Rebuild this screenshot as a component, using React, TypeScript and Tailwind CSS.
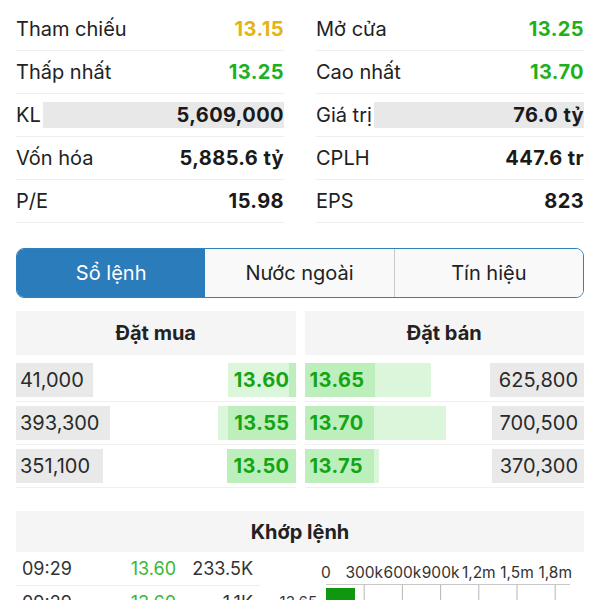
const green = 'text-[#1eb01e]'

const stats = [
  [
    { label: 'Tham chiếu', value: '13.15', color: 'text-[#e2b416]' },
    { label: 'Mở cửa', value: '13.25', color: green },
  ],
  [
    { label: 'Thấp nhất', value: '13.25', color: green },
    { label: 'Cao nhất', value: '13.70', color: green },
  ],
  [
    { label: 'KL', value: '5,609,000', bar: true },
    { label: 'Giá trị', value: '76.0 tỷ', bar: true },
  ],
  [
    { label: 'Vốn hóa', value: '5,885.6 tỷ' },
    { label: 'CPLH', value: '447.6 tr' },
  ],
  [
    { label: 'P/E', value: '15.98' },
    { label: 'EPS', value: '823' },
  ],
]

// volume bar width, light bar width, dark bar width
const bids = [
  { vol: '41,000', price: '13.60', volW: 77, light: 68, dark: 7 },
  { vol: '393,300', price: '13.55', volW: 94, light: 78, dark: 68 },
  { vol: '351,100', price: '13.50', volW: 87, light: 0, dark: 69 },
]

const asks = [
  { vol: '625,800', price: '13.65', volW: 94, light: 126, dark: 70 },
  { vol: '700,500', price: '13.70', volW: 92, light: 141, dark: 69 },
  { vol: '370,300', price: '13.75', volW: 92, light: 74, dark: 69 },
]

const trades = [
  { time: '09:29', price: '13.60', vol: '233.5K' },
  { time: '09:29', price: '13.60', vol: '1.1K' },
]

const ticks = ['0', '300k', '600k', '900k', '1,2m', '1,5m', '1,8m']

function StatRow({ label, value, color, bar }: { label: string; value: string; color?: string; bar?: boolean }) {
  return (
    <div className="flex items-center h-[43px] border-b border-[#efefef]">
      <span className="text-[#222]">{label}</span>
      {bar ? (
        <div className="flex-1 ml-[2px] h-[26px] bg-[#e8e8e8] flex items-center justify-end font-bold tracking-[0.4px] text-[#1a1a1a]">
          {value}
        </div>
      ) : (
        <span className={`ml-auto font-bold tracking-[0.4px] ${color ?? 'text-[#1a1a1a]'}`}>{value}</span>
      )}
    </div>
  )
}

function Chart() {
  return (
    <svg width="324" height="48" className="block" style={{ fontFamily: 'Inter, sans-serif' }}>
      {ticks.map((t, i) => (
        <g key={t}>
          <text x={66 + 38.2 * i} y={26} fontSize="15.5" textAnchor="middle" fill="#333">
            {t}
          </text>
          {i > 0 && <line x1={66 + 38.2 * i} y1={32} x2={66 + 38.2 * i} y2={48} stroke="#b5b5b5" strokeWidth="1" />}
        </g>
      ))}
      <line x1="66" y1="32.5" x2="310" y2="32.5" stroke="#c8c8c8" strokeWidth="1" />
      <rect x="66" y="36" width="29" height="14" fill="#0f970f" />
      <text x="57" y="55" fontSize="15" textAnchor="end" fill="#333">13.65</text>
    </svg>
  )
}

export default function App() {
  return (
    <div className="w-[600px] h-[600px] overflow-hidden bg-white px-4 pt-2 text-[20px] text-[#222]" style={{ fontFamily: 'Inter, "Noto Sans", sans-serif' }}>
      {/* Price stats */}
      <div className="grid grid-cols-2 gap-x-8">
        {stats.map((pair, i) => (
          <div key={i} className="contents">
            <StatRow {...pair[0]} />
            <StatRow {...pair[1]} />
          </div>
        ))}
      </div>

      {/* Tabs */}
      <div className="mt-[25px] h-[50px] flex border border-[#2f80be] rounded-lg overflow-hidden">
        <div className="flex-1 flex items-center justify-center bg-[#2b7cba] text-white">Sổ lệnh</div>
        <div className="flex-1 flex items-center justify-center bg-[#f9f9f9] text-[#222]">Nước ngoài</div>
        <div className="flex-1 flex items-center justify-center bg-[#f9f9f9] text-[#222] border-l border-[#c9c9c9]">Tín hiệu</div>
      </div>

      {/* Order book */}
      <div className="mt-[13px] grid grid-cols-2 gap-x-[9px]">
        <div className="h-[44px] bg-[#f5f5f5] flex items-center justify-center font-bold">Đặt mua</div>
        <div className="h-[44px] bg-[#f5f5f5] flex items-center justify-center font-bold">Đặt bán</div>

        <div className="mt-1">
          {bids.map((r) => (
            <div key={r.price} className="relative h-[43px] border-b border-[#f0f0f0] flex items-center">
              <div className="absolute left-0 top-1 bottom-1 bg-[#e9e9e9]" style={{ width: r.volW }} />
              <div className="absolute right-0 top-1 bottom-1 bg-[#dcf6dc]" style={{ width: r.light }} />
              <div className="absolute right-0 top-1 bottom-1 bg-[#bdefbd]" style={{ width: r.dark }} />
              <span className="relative pl-1 text-[#2a2a2a]">{r.vol}</span>
              <span className="relative ml-auto pr-[6px] font-bold tracking-[0.4px] text-[#14a514]">{r.price}</span>
            </div>
          ))}
        </div>
        <div className="mt-1">
          {asks.map((r) => (
            <div key={r.price} className="relative h-[43px] border-b border-[#f0f0f0] flex items-center">
              <div className="absolute left-0 top-1 bottom-1 bg-[#dcf6dc]" style={{ width: r.light }} />
              <div className="absolute left-0 top-1 bottom-1 bg-[#bdefbd]" style={{ width: r.dark }} />
              <div className="absolute right-0 top-1 bottom-1 bg-[#e9e9e9]" style={{ width: r.volW }} />
              <span className="relative pl-[5px] font-bold tracking-[0.4px] text-[#14a514]">{r.price}</span>
              <span className="relative ml-auto pr-[6px] text-[#2a2a2a]">{r.vol}</span>
            </div>
          ))}
        </div>
      </div>

      {/* Matched orders */}
      <div className="mt-[23px] h-[41px] bg-[#f5f5f5] flex items-center justify-center font-bold">Khớp lệnh</div>
      <div className="flex">
        <div className="w-[244px] text-[18px]">
          {trades.map((t, i) => (
            <div key={i} className="h-[34px] border-b border-[#eeeeee] flex items-center">
              <span className="pl-[6px] w-[100px] text-[#333]">{t.time}</span>
              <span className="w-[60px] text-right text-[#35b935]">{t.price}</span>
              <span className="w-[77px] text-right text-[#333]">{t.vol}</span>
            </div>
          ))}
        </div>
        <Chart />
      </div>
    </div>
  )
}
